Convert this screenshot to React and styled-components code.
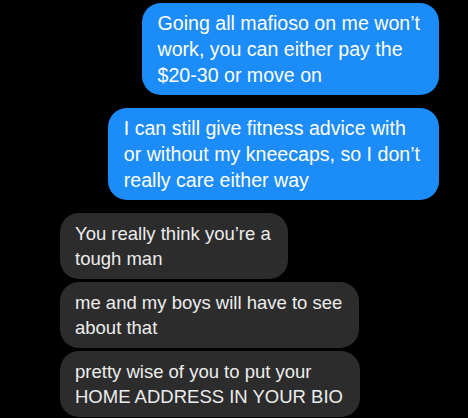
import styled, { createGlobalStyle } from 'styled-components'

const GlobalStyle = createGlobalStyle`
   html, body {
      margin: 0;
      padding: 0;
      background: #000;
   }
   body {
      font-family: "Liberation Sans", Arial, sans-serif;
   }
`;

const Thread = styled.div`
   width: 468px;
   height: 418px;
   overflow: hidden;
   display: flex;
   flex-direction: column;
   padding: 3px 29px 0 60px;
   box-sizing: border-box;
   background: #000;
`;

const Group = styled.div`
   display: flex;
   flex-direction: column;
   align-items: ${p => (p.$mine ? 'flex-end' : 'flex-start')};
   gap: ${p => (p.$mine ? '13px' : '3px')};
   margin-bottom: 13px;
`;

const Bubble = styled.div`
   background: ${p => (p.$mine ? '#1c8cf9' : '#2c2c2c')};
   color: ${p => (p.$mine ? '#fff' : '#ececec')};
   border-radius: 19px;
   font-size: ${p => (p.$mine ? '19.6px' : '18.5px')};
   line-height: ${p => (p.$mine ? '26px' : '25px')};
   padding: ${p => (p.$mine ? '7px 19px 7px 16px' : '8px 17px 8px 15px')};
   white-space: nowrap;
`;

const blue = [
   ['Going all mafioso on me won’t', 'work, you can either pay the', '$20-30 or move on'],
   ['I can still give fitness advice with', 'or without my kneecaps, so I don’t', 'really care either way'],
];

const gray = [
   ['You really think you’re a', 'tough man'],
   ['me and my boys will have to see', 'about that'],
   ['pretty wise of you to put your', 'HOME ADDRESS IN YOUR BIO'],
];

function Message({ lines, mine }) {
   return <Bubble $mine={mine}>
      {lines.map((l, i) => <div key={i}>{l}</div>)}
   </Bubble>
}

export default function App() {
   return <Thread>
      <GlobalStyle />
      <Group $mine>
         {blue.map((m, i) => <Message key={i} lines={m} mine />)}
      </Group>
      <Group>
         {gray.map((m, i) => <Message key={i} lines={m} />)}
      </Group>
   </Thread>
}
